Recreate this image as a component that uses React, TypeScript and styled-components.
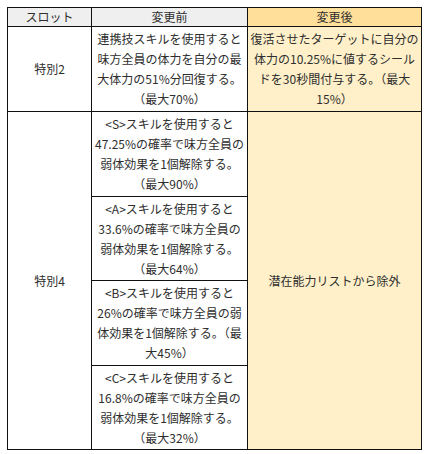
import React from "react";
import styled, { createGlobalStyle } from "styled-components";

const GlobalStyle = createGlobalStyle`
  body {
    margin: 0;
    background: #ffffff;
    font-family: "Noto Sans CJK JP", "Noto Sans", sans-serif;
    color: #2e2e2e;
  }
`;

const Page = styled.div`
  padding: 7px;
`;

const Table = styled.table`
  border-collapse: collapse;
  width: 414px;
  table-layout: fixed;
  font-size: 12px;
`;

type Tone = "gray" | "orange" | "cream" | "white";

const tones: Record<Tone, string> = {
  gray: "#efefef",
  orange: "#ffdf99",
  cream: "#fff0c9",
  white: "#ffffff",
};

const Head = styled.th<{ $tone: Tone }>`
  background: ${({ $tone }) => tones[$tone]};
  border: 1px solid #111111;
  font-weight: 400;
  line-height: 18px;
  padding: 0;
  text-align: center;
`;

const Cell = styled.td<{ $tone?: Tone; $tight?: boolean }>`
  background: ${({ $tone = "white" }) => tones[$tone]};
  border: 1px solid #111111;
  line-height: 20px;
  padding: ${({ $tight }) => ($tight ? "2px 2px 1.5px" : "2px")};
  text-align: center;
  vertical-align: middle;
`;

const Lines = ({ lines }: { lines: string[] }) => (
  <>
    {lines.map((l, i) => (
      <React.Fragment key={i}>
        {i > 0 && <br />}
        {l}
      </React.Fragment>
    ))}
  </>
);

const slot4 = [
  ["<S>スキルを使用すると", "47.25%の確率で味方全員の", "弱体効果を1個解除する。", "（最大90%）"],
  ["<A>スキルを使用すると", "33.6%の確率で味方全員の", "弱体効果を1個解除する。", "（最大64%）"],
  ["<B>スキルを使用すると", "26%の確率で味方全員の弱", "体効果を1個解除する。（最", "大45%）"],
  ["<C>スキルを使用すると", "16.8%の確率で味方全員の", "弱体効果を1個解除する。", "（最大32%）"],
];

export default function App() {
  return (
    <Page>
      <GlobalStyle />
      <Table>
        <colgroup>
          <col style={{ width: 84 }} />
          <col style={{ width: 156 }} />
          <col style={{ width: 174 }} />
        </colgroup>
        <thead>
          <tr>
            <Head $tone="gray">スロット</Head>
            <Head $tone="gray">変更前</Head>
            <Head $tone="orange">変更後</Head>
          </tr>
        </thead>
        <tbody>
          <tr>
            <Cell>特別2</Cell>
            <Cell>
              <Lines lines={["連携技スキルを使用すると", "味方全員の体力を自分の最", "大体力の51%分回復する。", "（最大70%）"]} />
            </Cell>
            <Cell $tone="cream">
              <Lines lines={["復活させたターゲットに自分の", "体力の10.25%に値するシール", "ドを30秒間付与する。（最大", "15%）"]} />
            </Cell>
          </tr>
          {slot4.map((lines, i) => (
            <tr key={i}>
              {i === 0 && <Cell rowSpan={4}>特別4</Cell>}
              <Cell $tight>
                <Lines lines={lines} />
              </Cell>
              {i === 0 && (
                <Cell rowSpan={4} $tone="cream">
                  潜在能力リストから除外
                </Cell>
              )}
            </tr>
          ))}
        </tbody>
      </Table>
    </Page>
  );
}
